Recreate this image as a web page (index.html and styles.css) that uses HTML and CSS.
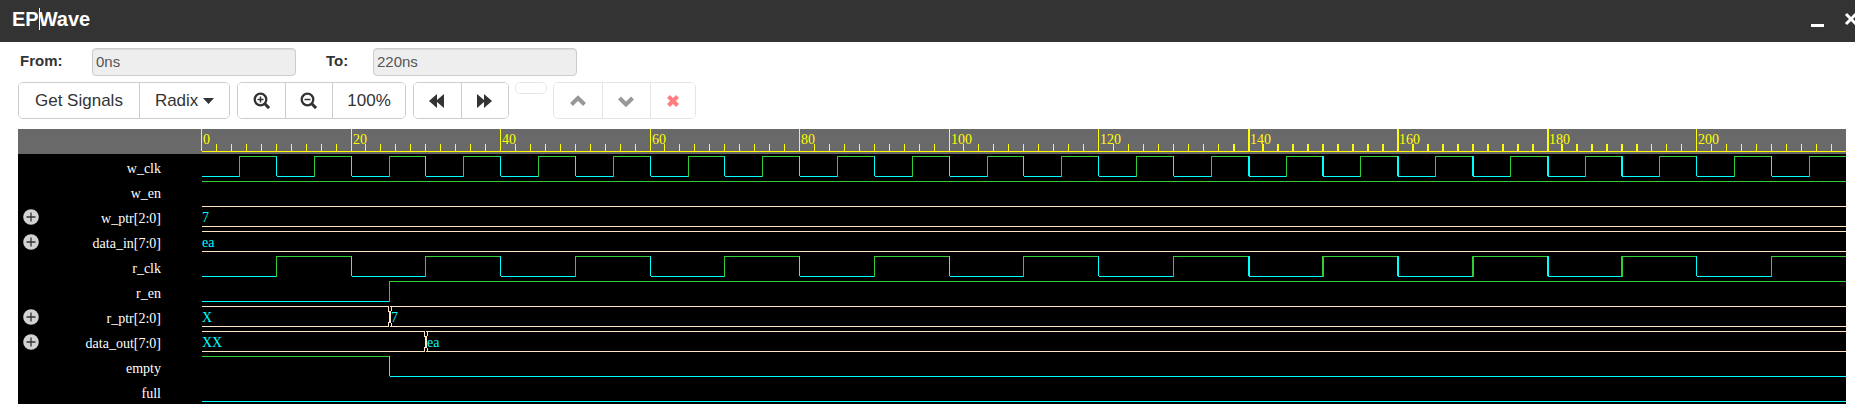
FILE: index.html
```html
<!DOCTYPE html>
<html lang="en">
<head>
<meta charset="utf-8">
<title>EPWave</title>
<link rel="stylesheet" href="styles.css">
</head>
<body>
<header class="titlebar">
  <h1 class="title">EP<span class="caret-mark"></span>Wave</h1>
  <div class="window-controls">
    <button type="button" aria-label="Minimize"><svg width="14" height="16" viewBox="0 0 14 16"><path d="M1 13h13v3H1z" fill="#fff"/></svg></button>
    <button type="button" aria-label="Close"><svg width="14" height="16" viewBox="0 0 14 16"><path d="M2 3l10 10M12 3L2 13" stroke="#fff" stroke-width="3"/></svg></button>
  </div>
</header>
<form class="range">
  <label for="from">From:</label>
  <input id="from" type="text" value="0ns" readonly>
  <label for="to">To:</label>
  <input id="to" type="text" value="220ns" readonly>
</form>
<div class="toolbar">
  <div class="group">
    <button type="button" class="btn text">Get Signals</button>
    <button type="button" class="btn text">Radix<svg class="drop" width="11" height="6" viewBox="0 0 11 6"><path d="M0 0h11L5.500 6z" fill="#333"/></svg></button>
  </div>
  <div class="group">
    <button type="button" class="btn" aria-label="Zoom in"><svg width="18" height="18" viewBox="0 0 18 18" fill="none" stroke="#333"><circle cx="7.500" cy="7.500" r="5.800" stroke-width="2.300"/><path d="M11.800 11.800l4.300 4.300" stroke-width="3"/><path d="M7.500 4.500v6M4.500 7.500h6" stroke-width="1.500"/></svg></button>
    <button type="button" class="btn" aria-label="Zoom out"><svg width="18" height="18" viewBox="0 0 18 18" fill="none" stroke="#333"><circle cx="7.500" cy="7.500" r="5.800" stroke-width="2.300"/><path d="M11.800 11.800l4.300 4.300" stroke-width="3"/><path d="M4.500 7.500h6" stroke-width="1.500"/></svg></button>
    <button type="button" class="btn percent">100%</button>
  </div>
  <div class="group">
    <button type="button" class="btn" aria-label="Rewind"><svg width="18" height="16" viewBox="0 0 18 16"><path d="M9 1v6L16 1v14L9 9v6L1 8z" fill="#333"/></svg></button>
    <button type="button" class="btn" aria-label="Forward"><svg width="18" height="16" viewBox="0 0 18 16"><path d="M8 1v6L1 1v14L8 9v6L16 8z" fill="#333"/></svg></button>
  </div>
  <div class="group slim"><button type="button" class="btn-empty" aria-label="Cursor" disabled></button></div>
  <div class="group disabled">
    <button type="button" class="btn" aria-label="Move up" disabled><svg width="18" height="16" viewBox="0 0 18 16"><path d="M2.500 11.500L9 5l6.500 6.500" fill="none" stroke="#333" stroke-width="4"/></svg></button>
    <button type="button" class="btn" aria-label="Move down" disabled><svg width="18" height="16" viewBox="0 0 18 16"><path d="M2.500 5L9 11.500L15.500 5" fill="none" stroke="#333" stroke-width="4"/></svg></button>
    <button type="button" class="btn last" aria-label="Remove" disabled><svg width="14" height="16" viewBox="0 0 14 16"><path d="M2.500 3.500l9 9M11.500 3.500l-9 9" fill="none" stroke="#f00" stroke-width="4.200"/></svg></button>
  </div>
</div>
<main class="viewer">
  <ul class="names">
    <li>w_clk</li>
    <li>w_en</li>
    <li class="bus">w_ptr[2:0]</li>
    <li class="bus">data_in[7:0]</li>
    <li>r_clk</li>
    <li>r_en</li>
    <li class="bus">r_ptr[2:0]</li>
    <li class="bus">data_out[7:0]</li>
    <li>empty</li>
    <li>full</li>
  </ul>
  <div class="plot"><svg id="waves" class="waves" role="img" aria-label="Signal waveforms from 0ns to 220ns"></svg></div>
</main>
<script src="waves.js"></script>
</body>
</html>
```
FILE: styles.css
```css
* { box-sizing: border-box; }
body {
  margin: 0;
  background: #fff;
  color: #333;
  font-family: "Liberation Sans", Arial, sans-serif;
}
button { font: inherit; color: inherit; cursor: pointer; }
svg { display: block; flex: none; }

.titlebar {
  display: flex;
  justify-content: space-between;
  align-items: center;
  height: 42px;
  padding: 0 0 4px 12px;
  background: #333;
  color: #fff;
  overflow: hidden;
}
.title { margin: 0; font-size: 20px; line-height: 22px; }
.caret-mark {
  display: inline-block;
  width: 1px;
  height: 22px;
  margin-right: -1px;
  background: #fff;
  vertical-align: top;
}
.window-controls { display: flex; gap: 20px; margin-right: -3px; }
.window-controls button { padding: 0; border: 0; background: none; }

.range {
  display: flex;
  align-items: center;
  padding: 6px 20px;
  font-size: 15px;
}
.range label { width: 72px; font-weight: bold; line-height: 20px; padding-bottom: 2px; }
.range input + label { width: 47px; margin-left: 30px; }
.range input {
  width: 204px;
  height: 28px;
  padding: 0 3px 2px;
  border: 1px solid #ccc;
  border-radius: 4px;
  background: #eee;
  box-shadow: inset 0 1px 1px rgba(0, 0, 0, .075);
  color: #555;
  font: inherit;
}

.toolbar { display: flex; align-items: flex-start; gap: 6px; padding: 0 18px; }
.group {
  display: flex;
  border: 1px solid #ccc;
  border-radius: 5px;
  overflow: hidden;
}
.group:nth-child(-n+2) { margin-right: 1px; }
.btn {
  display: flex;
  align-items: center;
  justify-content: center;
  width: 47px;
  height: 35px;
  padding: 0;
  border: 0;
  background: #fff;
  font-size: 17px;
}
.btn + .btn { border-left: 1px solid #ccc; }
.btn.text { width: auto; padding: 0 15px; }
.btn.text:first-child { padding: 0 16px; }
.btn.percent { width: auto; padding: 0 14px; }
.drop { margin-left: 5px; }
.btn-empty { width: 30px; height: 10px; padding: 0; border: 0; background: #fff; }
.group.slim { opacity: .5; }
.group.disabled { opacity: .5; }
.group.disabled .btn { width: 48px; }
.group.disabled .btn.last { width: 45px; }

.viewer {
  display: flex;
  margin: 10px 9px 3px 18px;
  background: linear-gradient(#696969 25px, #000 25px);
  font-family: "Liberation Serif", "Times New Roman", serif;
  font-size: 14px;
}
.names {
  flex: none;
  width: 182px;
  margin: 0;
  padding: 25px 39px 0 5px;
  list-style: none;
  color: #fff;
  text-align: right;
}
.names li { display: flex; align-items: center; justify-content: flex-end; height: 25px; padding-top: 5px; }
.names li.bus { justify-content: space-between; }
.expand {
  width: 16px;
  height: 16px;
  margin-top: -5px;
  padding: 0;
  border: 0;
  background: none;
}
.plot { flex: 1; min-width: 0; }
.waves { width: 100%; height: 275px; overflow: hidden; }
.waves path { fill: none; stroke-width: 1; shape-rendering: crispEdges; }
.ruler { stroke: #ff0; }
.high { stroke: #32cd32; }
.low { stroke: #0ff; }
.vector { stroke: #ffe4c4; }
.time { fill: #ff0; }
.value { fill: #0ff; }
```
FILE: waves.js
```javascript
const END = 220;
const ROW = 25;

function clock(half) {
  const steps = [];
  for (let t = 0, v = 0; t < END; t += half, v = 1 - v) steps.push([t, v]);
  return steps;
}

const signals = [
  { steps: clock(5) },
  { steps: [[0, 1]] },
  { bus: [[0, "7"]] },
  { bus: [[0, "ea"]] },
  { steps: clock(10) },
  { steps: [[0, 0], [25, 1]] },
  { bus: [[0, "X"], [25, "7"]] },
  { bus: [[0, "XX"], [30, "ea"]] },
  { steps: [[0, 1], [25, 0]] },
  { steps: [[0, 0]] }
];

const svg = document.getElementById("waves");

function draw() {
  const width = svg.getBoundingClientRect().width;
  const scale = (width - 1.5) / END;
  const px = t => Math.floor(1.5 + t * scale + (t % 10 === 5 ? 0.7 : 0)) + 0.5;
  const out = [];
  const path = (cls, d, w) => out.push(`<path class="${cls}" d="${d}"${w ? ` style="stroke-width:${w}"` : ""}/>`);
  const text = (cls, x, y, s) => out.push(`<text class="${cls}" x="${x}" y="${y}">${s}</text>`);
  // Vertical strokes in the later part of the time line are two pixels wide.
  const vertical = (cls, t, y1, y2) => {
    const wide = t > 137 && t < 193 && t % 2 === 0;
    const x = px(t) + (wide ? 0.5 : 0);
    path(cls, `M${x} ${y1}V${y2}`, wide ? 2 : 0);
  };

  for (let t = 0; t < END; t += 2) {
    vertical("ruler", t, t % 20 ? 15 : 0, 22);
    if (t % 20 === 0) text("time", px(t) + 1.5, 15, t);
  }
  path("ruler", `M2 22.5H${width}`);

  signals.forEach((signal, i) => {
    const top = ROW * (i + 1) + 2.5;
    const bottom = top + 20;
    if (signal.steps) {
      signal.steps.forEach(([t, v], k) => {
        const next = signal.steps[k + 1];
        const cls = v ? "high" : "low";
        const y = v ? top : bottom;
        if (k) vertical(cls, t, top - 0.5, bottom + (v ? 0.5 : -0.5));
        path(cls, `M${px(t) + 0.5} ${y}H${next ? px(next[0]) + 0.5 : width}`);
      });
      return;
    }
    signal.bus.forEach(([t, label], k) => {
      const next = signal.bus[k + 1];
      const start = px(t) + 0.5;
      const stop = next ? px(next[0]) - 0.5 : width;
      path("vector", `M${start} ${top}H${stop}M${start} ${bottom}H${stop}`);
      if (k) {
        const x = px(t);
        path("vector", `M${x - 1} ${top}v5M${x - 1} ${bottom}v-5M${x + 2} ${top}v4M${x + 2} ${bottom}v-4`);
        path("vector", `M${x + 0.5} ${top + 4}V${bottom - 4}`, 2);
      }
      text("value", k ? start + 1 : start, top + 15.5, label);
    });
  });
  svg.innerHTML = out.join("");
}

document.querySelectorAll(".bus").forEach(row => {
  const button = document.createElement("button");
  button.type = "button";
  button.className = "expand";
  button.setAttribute("aria-label", "Expand " + row.textContent);
  button.innerHTML = '<svg width="16" height="16" viewBox="0 0 16 16"><circle cx="8" cy="8" r="7.800" fill="#d3d3d3"/><path d="M8 3.500v9M3.500 8h9" stroke="#333" stroke-width="1.300"/></svg>';
  row.prepend(button);
});

draw();
window.addEventListener("resize", draw);
```
